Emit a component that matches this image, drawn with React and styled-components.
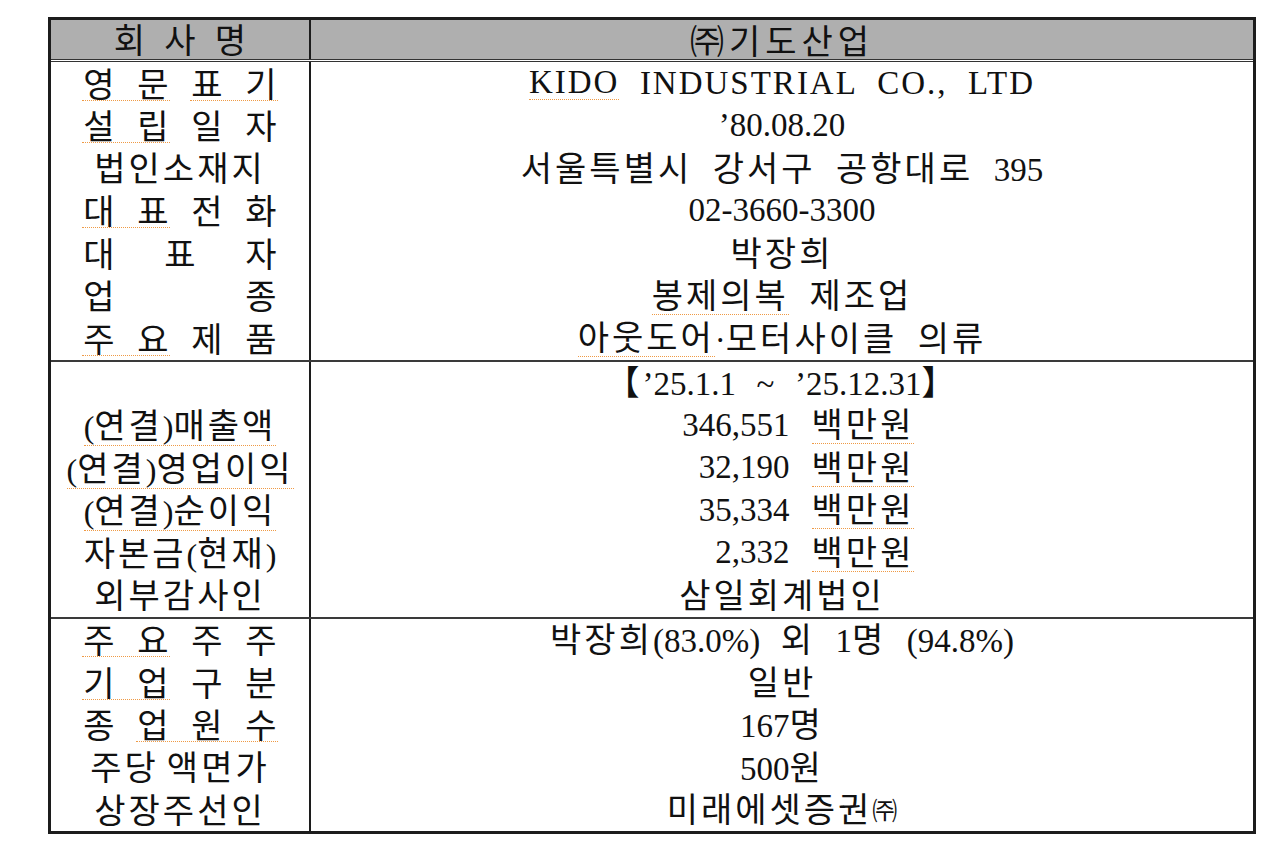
import React from "react";
import styled, { createGlobalStyle } from "styled-components";

const Global = createGlobalStyle`
  html, body { margin: 0; padding: 0; background: #fff; }
  body {
    font-family: "Liberation Serif", "Noto Sans CJK KR", serif;
    color: #111;
  }
`;

const Page = styled.div`
  padding: 17px 0 0 48px;
`;

const Table = styled.div`
  width: 1208px;
  box-sizing: border-box;
  border: 3px solid #1c1c1c;
`;

const Header = styled.div`
  display: grid;
  grid-template-columns: 260px 1fr;
  height: 42px;
  box-sizing: border-box;
  background: #afafaf;
  background-clip: padding-box;
  border-bottom: 3px double #333;
`;

const Section = styled.div`
  display: grid;
  grid-template-columns: 260px 1fr;
  grid-auto-rows: 42.5px;
  border-bottom: ${(p) => (p.$last ? "none" : "2px solid #3a3a3a")};
`;

const LabelCell = styled.div`
  display: flex;
  align-items: center;
  justify-content: center;
  border-right: 2px solid #1c1c1c;
  font-size: 32px;
  line-height: 1;
`;

const ValueCell = styled.div`
  display: flex;
  align-items: center;
  justify-content: center;
  font-size: 33px;
  line-height: 1;
  white-space: pre;
  word-spacing: ${(p) => p.$ws ?? 2}px;
  letter-spacing: ${(p) => p.$ls || 0}px;
`;

const Hangul = styled.span`
  font-family: "Noto Sans CJK KR", sans-serif;
  font-size: 34px;
  letter-spacing: ${(p) => p.$ls ?? 3}px;
`;

const Spread = styled.div`
  display: flex;
  gap: ${(p) => p.$gap}px;
`;

const Group = styled.span`
  display: flex;
  gap: ${(p) => p.$gap}px;
  border-bottom: 1px dotted ${(p) => (p.$u ? "#ef9a45" : "transparent")};
`;

const Char = styled.span`
  display: inline-block;
  width: 34px;
  text-align: center;
  font-family: "Noto Sans CJK KR", sans-serif;
  font-size: 34px;
`;

const Plain = styled.span`
  white-space: pre;
`;

const Mark = styled.span`
  border-bottom: 1px dotted #ef9a45;
`;

const Amount = styled.span`
  width: 140px;
  text-align: right;
  margin-right: 22px;
`;

const Small = styled.span`
  font-family: "Noto Sans CJK KR", sans-serif;
  font-size: 25px;
`;

const HANGUL = /([\u3131-\u318E\uAC00-\uD7A3\u3200-\u32FF【】]+)/;

const Text = ({ t, ls }) =>
  t.split(HANGUL).map((s, i) =>
    i % 2 ? (
      <Hangul key={i} $ls={ls}>
        {s}
      </Hangul>
    ) : (
      s
    )
  );

const SpreadLabel = ({ groups, width = 196 }) => {
  const n = groups.reduce((s, g) => s + g.t.length, 0);
  const gap = (width - n * 34) / (n - 1);
  return (
    <Spread $gap={gap}>
      {groups.map((g, i) => (
        <Group key={i} $gap={gap} $u={g.u}>
          {[...g.t].map((c, j) => (
            <Char key={j}>{c}</Char>
          ))}
        </Group>
      ))}
    </Spread>
  );
};

const Parts = ({ parts, ls }) =>
  parts.map((p, i) =>
    p.u ? (
      <Mark key={i}>
        <Text t={p.t} ls={ls} />
      </Mark>
    ) : (
      <span key={i}>
        <Text t={p.t} ls={ls} />
      </span>
    )
  );

const sections = [
  [
    { spread: [{ t: "영문", u: true }, { t: "표기", u: true }], value: [{ t: "KIDO", u: true }, { t: "  INDUSTRIAL  CO.,  LTD" }], ls: 2, ws: 0 },
    { spread: [{ t: "설립", u: true }, { t: "일자" }], value: [{ t: "’80.08.20" }] },
    { label: [{ t: "법인소재지" }], value: [{ t: "서울특별시  강서구  공항대로  395" }] },
    { spread: [{ t: "대표", u: true }, { t: "전화" }], value: [{ t: "02-3660-3300" }] },
    { spread: [{ t: "대표자" }], value: [{ t: "박장희" }] },
    { spread: [{ t: "업종" }], value: [{ t: "봉제의복", u: true }, { t: "  제조업" }] },
    { spread: [{ t: "주요", u: true }, { t: "제품" }], value: [{ t: "아웃도어", u: true }, { t: "·모터사이클  의류" }] },
  ],
  [
    { label: [{ t: "" }], value: [{ t: "【’25.1.1  ~  ’25.12.31】" }], ws: 2 },
    { label: [{ t: "(연결)매출액", u: true }], amount: "346,551" },
    { label: [{ t: "(연결)영업이익", u: true }], amount: "32,190" },
    { label: [{ t: "(연결)순이익", u: true }], amount: "35,334" },
    { label: [{ t: "자본금(현재)" }], amount: "2,332" },
    { label: [{ t: "외부감사인" }], value: [{ t: "삼일회계법인" }] },
  ],
  [
    { spread: [{ t: "주요", u: true }, { t: "주주" }], value: [{ t: "박장희(83.0%)  외  1명  (94.8%)" }] },
    { spread: [{ t: "기업", u: true }, { t: "구분" }], value: [{ t: "일반" }] },
    { spread: [{ t: "종" }, { t: "업원수", u: true }], value: [{ t: "167명" }] },
    { label: [{ t: "주당 액면가" }], value: [{ t: "500원" }] },
    { label: [{ t: "상장주선인" }], value: [{ t: "미래에셋증권" }], tail: "㈜" },
  ],
];

export default function App() {
  return (
    <Page>
      <Global />
      <Table>
        <Header>
          <LabelCell>
            <SpreadLabel groups={[{ t: "회사명" }]} width={135} />
          </LabelCell>
          <ValueCell>
            <Text t="㈜기도산업" ls={5} />
          </ValueCell>
        </Header>
        {sections.map((rows, si) => (
          <Section key={si} $last={si === sections.length - 1}>
            {rows.map((r, ri) => (
              <React.Fragment key={ri}>
                <LabelCell>
                  {r.spread ? (
                    <SpreadLabel groups={r.spread} />
                  ) : (
                    <Plain>
                      <Parts parts={r.label} ls={3} />
                    </Plain>
                  )}
                </LabelCell>
                <ValueCell $ls={r.ls} $ws={r.ws}>
                  {r.amount ? (
                    <>
                      <Amount>{r.amount}</Amount>
                      <Mark>
                        <Text t="백만원" ls={3} />
                      </Mark>
                    </>
                  ) : (
                    <>
                      <Parts parts={r.value} />
                      {r.tail && <Small>{r.tail}</Small>}
                    </>
                  )}
                </ValueCell>
              </React.Fragment>
            ))}
          </Section>
        ))}
      </Table>
    </Page>
  );
}
